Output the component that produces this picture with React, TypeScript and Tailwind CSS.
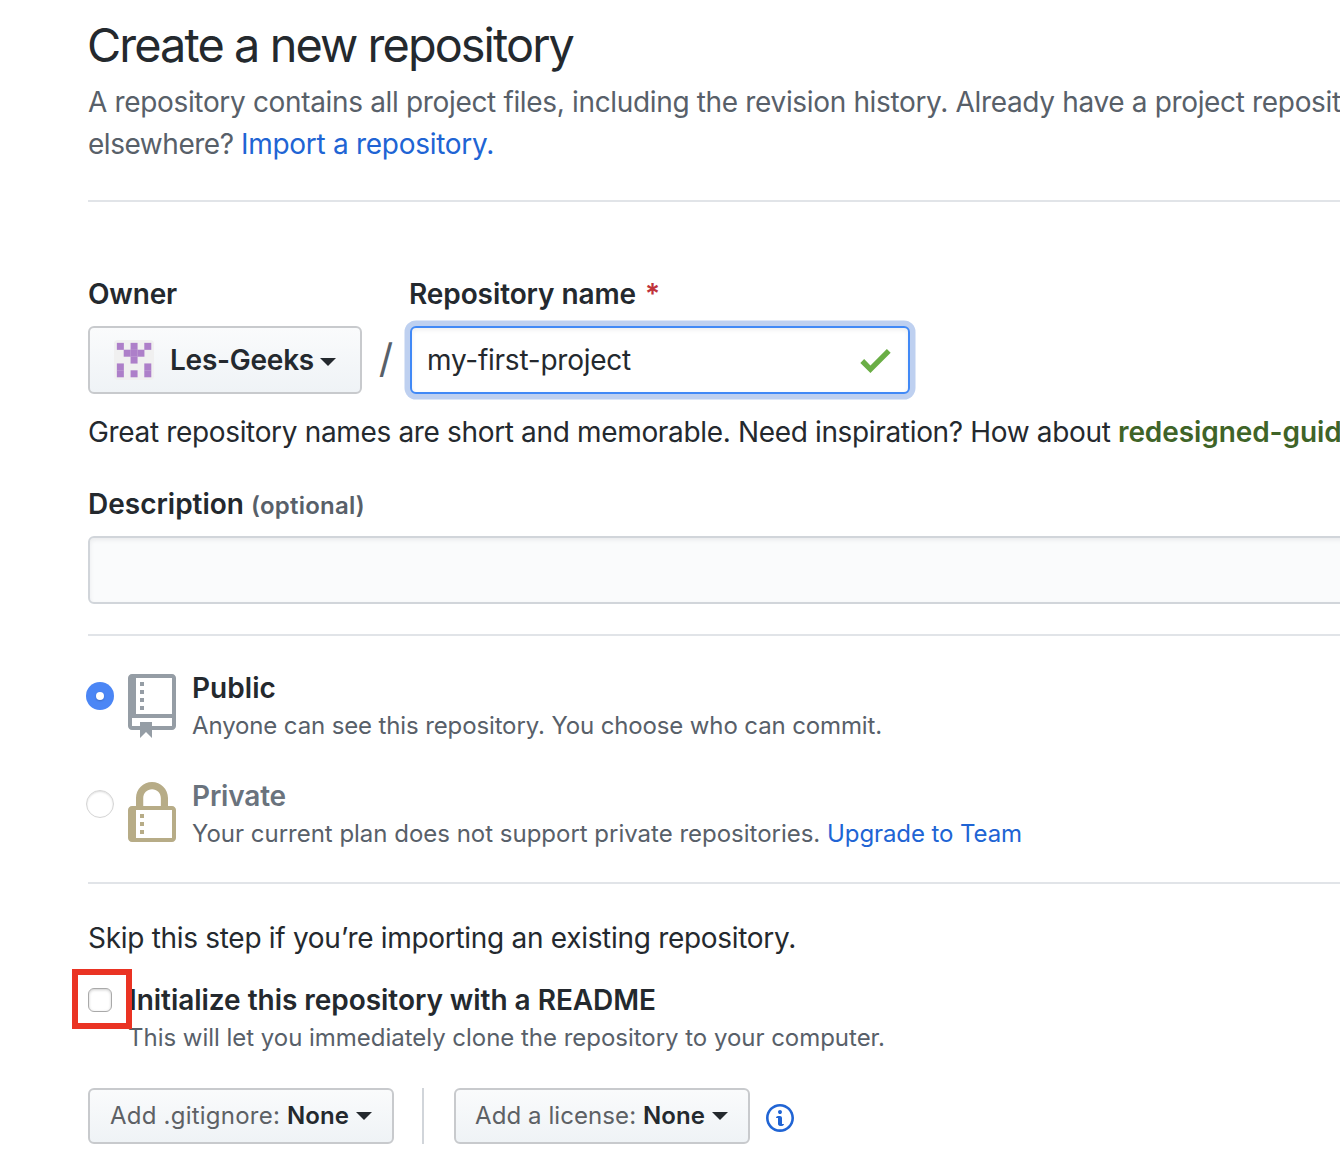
import React, { useLayoutEffect, useRef } from "react";

type TextProps = { w: number; className?: string; children: React.ReactNode };

/** Single line of text whose letter spacing is tuned to a given width. */
function T({ w, className = "", children }: TextProps) {
  const ref = useRef<HTMLSpanElement>(null);
  useLayoutEffect(() => {
    const el = ref.current;
    if (!el) return;
    el.style.letterSpacing = "0px";
    const n = (el.textContent || "").length;
    el.style.letterSpacing = (w - el.getBoundingClientRect().width) / n + "px";
  });
  return (
    <span ref={ref} className={"inline-block whitespace-pre " + className}>
      {children}
    </span>
  );
}

function Caret({ className = "" }: { className?: string }) {
  return <span className={"h-0 w-0 border-x-8 border-t-8 border-x-transparent border-t-[#24292e] " + className} />;
}

const CELLS = [
  [0, 0], [2, 0], [4, 0],
  [1, 1], [2, 1], [3, 1],
  [2, 2],
  [0, 3], [4, 3],
  [0, 4], [2, 4], [4, 4],
];

function Identicon() {
  return (
    <svg width="40" height="40" viewBox="0 0 40 40">
      <rect width="40" height="40" rx="4" fill="#f0f0f0" />
      {CELLS.map(([x, y]) => (
        <rect key={x + "-" + y} x={2.85 + x * 6.86} y={2.85 + y * 6.86} width="7" height="7" fill="#ad7fc9" />
      ))}
    </svg>
  );
}

function RepoIcon() {
  return (
    <svg width="48" height="64" viewBox="0 0 12 16" fill="#959da5">
      <path fillRule="evenodd" d="M4 9H3V8h1v1zm0-3H3v1h1V6zm0-2H3v1h1V4zm0-2H3v1h1V2zm8-1v12c0 .55-.45 1-1 1H6v2l-1.5-1.5L3 16v-2H1c-.55 0-1-.45-1-1V1c0-.55.45-1 1-1h10c.55 0 1 .45 1 1zm-1 10H1v2h2v-1h3v1h5v-2zm0-10H2v9h9V1z" />
    </svg>
  );
}

function LockIcon() {
  return (
    <svg width="48" height="64" viewBox="0 0 12 16" fill="#b7ac87">
      <path fillRule="evenodd" d="M4 13H3v-1h1v1zm8-6v7c0 .55-.45 1-1 1H1c-.55 0-1-.45-1-1V7c0-.55.45-1 1-1h1V4c0-2.2 1.8-4 4-4s4 1.8 4 4v2h1c.55 0 1 .45 1 1zM3.8 6h4.41V4c0-1.22-.98-2.2-2.2-2.2-1.22 0-2.2.98-2.2 2.2v2H3.8zM11 7H2v7h9V7zM4 8H3v1h1V8zm0 2H3v1h1v-1z" />
    </svg>
  );
}

function InfoIcon() {
  return (
    <svg width="28" height="32" viewBox="0 0 14 16" fill="#2064d4">
      <path fillRule="evenodd" d="M6.3 5.69a.942.942 0 0 1-.28-.7c0-.28.09-.52.28-.7.19-.18.42-.28.7-.28.28 0 .52.09.7.28.18.19.28.42.28.7 0 .28-.09.52-.28.7a1 1 0 0 1-.7.3c-.28 0-.52-.11-.7-.3zM8 7.99c-.02-.25-.11-.48-.31-.69-.2-.19-.42-.3-.69-.31H6c-.27.02-.48.13-.69.31-.2.2-.3.44-.31.69h1v3c.02.27.11.5.31.69.2.2.42.31.69.31h1c.27 0 .48-.11.69-.31.2-.19.3-.42.31-.69H8V7.98v.01zM7 2.3c-3.14 0-5.7 2.54-5.7 5.68 0 3.14 2.56 5.7 5.7 5.7s5.7-2.55 5.7-5.7c0-3.15-2.56-5.69-5.7-5.69v.01zM7 .98c3.86 0 7 3.14 7 7s-3.14 7-7 7-7-3.12-7-7 3.14-7 7-7z" />
    </svg>
  );
}

const button = "flex items-center rounded-[6px] border-2 border-[#c8cacd] bg-linear-to-b from-[#fafbfc] to-[#eff3f6]";

export default function App() {
  return (
    <div className="h-[1170px] w-[1340px] overflow-hidden bg-white pl-[88px] font-['Inter',sans-serif] text-[28px] font-[430] text-[#24292e]">
      <h1 className="h-[81px] pt-[15px] text-[46.8px] leading-[60px]">
        <T w={486} className="-ml-px">Create a new repository</T>
      </h1>
      <p className="h-[119px] w-[1400px] leading-[42px] text-[#586069]">
        <T w={1295}>A repository contains all project files, including the revision history. Already have a project repository</T>
        <br />
        <T w={153}>elsewhere? </T>
        <a className="text-[#2064d4]"><T w={253}>Import a repository.</T></a>
      </p>
      <div className="h-[2px] bg-[#e1e4e8]" />

      <div className="flex h-[124px] pt-[71px] font-semibold leading-[42px]">
        <div className="w-[321px]"><T w={89}>Owner</T></div>
        <T w={227}>Repository name</T>
        <span className="ml-[9px] text-[#c0333b]">*</span>
      </div>
      <div className="flex h-[68px]">
        <div className={button + " w-[274px] pl-[24px] font-semibold"}>
          <Identicon />
          <T w={144} className="ml-[16px]">Les-Geeks</T>
          <Caret className="ml-[6px] mt-[3px]" />
        </div>
        <div className="flex w-[48px] items-center justify-center pb-[2px] text-[40px] text-[#586069]"><span>/</span></div>
        <div className="flex w-[500px] items-center justify-between rounded-[6px] border-2 border-[#4189f6] bg-white pl-[15px] pr-[17px] shadow-[0_0_0_5.5px_#bed0f0,inset_0_2px_4px_#1b1f2313]">
          <T w={204}>my-first-project</T>
          <svg width="31" height="24" viewBox="0 3.5 12 9.5" fill="#6aae45" className="mt-[2px]">
            <path d="M12 5l-8 8-4-4 1.5-1.5L4 10l6.5-6.5L12 5z" />
          </svg>
        </div>
      </div>
      <p className="h-[88px] w-[1400px] whitespace-nowrap pt-[17px] leading-[42px]">
        <T w={1030}>Great repository names are short and memorable. Need inspiration? How about </T>
        <T w={240} className="font-semibold text-[#3f6428]">redesigned-guide</T>
      </p>

      <div className="flex h-[54px] items-baseline whitespace-pre pt-px font-semibold leading-[42px]">
        <T w={156}>Description</T>
        <T w={114} className="ml-[7px] text-[24px] text-[#586069]">(optional)</T>
      </div>
      <div className="h-[68px] w-[1300px] rounded-[6px] border-2 border-[#d1d5da] bg-[#fafbfc] shadow-[inset_0_2px_4px_#1b1f2313]" />
      <div className="mt-[30px] h-[2px] bg-[#e1e4e8]" />

      <div className="-ml-[2px] flex h-[108px] pt-[38px]">
        <div className="mt-[8px] flex h-[28px] w-[28px] shrink-0 items-center justify-center rounded-full bg-[#4b86f5]">
          <div className="h-[8px] w-[8px] rounded-full bg-white shadow-[0_1px_2px_#0003]" />
        </div>
        <div className="ml-[14px]"><RepoIcon /></div>
        <div className="-mt-[3px] ml-[16px]">
          <div className="h-[38px] font-semibold leading-[34px]"><T w={84}>Public</T></div>
          <div className="text-[24px] leading-[34px] text-[#586069]">
            <T w={690}>Anyone can see this repository. You choose who can commit.</T>
          </div>
        </div>
      </div>
      <div className="-ml-[2px] flex h-[138px] pt-[38px]">
        <div className="mt-[8px] h-[28px] w-[28px] shrink-0 rounded-full border border-[#d5d5d5] bg-white shadow-[inset_0_1px_2px_#0002]" />
        <div className="ml-[14px]"><LockIcon /></div>
        <div className="-mt-[3px] ml-[16px]">
          <div className="h-[38px] font-semibold leading-[34px] text-[#6a737d]"><T w={94}>Private</T></div>
          <div className="whitespace-nowrap text-[24px] leading-[34px] text-[#586069]">
            <T w={635}>Your current plan does not support private repositories. </T>
            <a className="text-[#2064d4]"><T w={195}>Upgrade to Team</T></a>
          </div>
        </div>
      </div>
      <div className="h-[2px] bg-[#e1e4e8]" />

      <p className="h-[98px] pt-[33px] leading-[42px]">
        <T w={708}>Skip this step if you’re importing an existing repository.</T>
      </p>
      <div className="relative flex h-[106px]">
        <div className="mt-[6px] h-[24px] w-[24px] rounded-[6px] border border-[#a9a9a9] bg-white shadow-[inset_0_1px_3px_#0003]" />
        <div className="absolute -left-[16px] -top-[13px] h-[60px] w-[60px] border-[6px] border-[#ea3323]" />
        <div className="ml-[17px]">
          <div className="h-[38px] font-semibold leading-[36px]"><T w={527}>Initialize this repository with a README</T></div>
          <div className="text-[24px] leading-[36px] text-[#586069]">
            <T w={757} className="-ml-px">This will let you immediately clone the repository to your computer.</T>
          </div>
        </div>
      </div>

      <div className="flex h-[56px] text-[24px]">
        <div className={button + " w-[306px] whitespace-pre pl-[20px]"}>
          <T w={177} className="text-[#5d6165]">Add .gitignore: </T>
          <T w={62} className="font-semibold">None</T>
          <Caret className="ml-[7px]" />
        </div>
        <div className="ml-[28px] h-[56px] w-[2px] bg-[#d1d5da]" />
        <div className={button + " ml-[30px] w-[296px] whitespace-pre pl-[19px]"}>
          <T w={168} className="text-[#5d6165]">Add a license: </T>
          <T w={62} className="font-semibold">None</T>
          <Caret className="ml-[7px]" />
        </div>
        <div className="ml-[16px] mt-[14px]"><InfoIcon /></div>
      </div>
    </div>
  );
}
